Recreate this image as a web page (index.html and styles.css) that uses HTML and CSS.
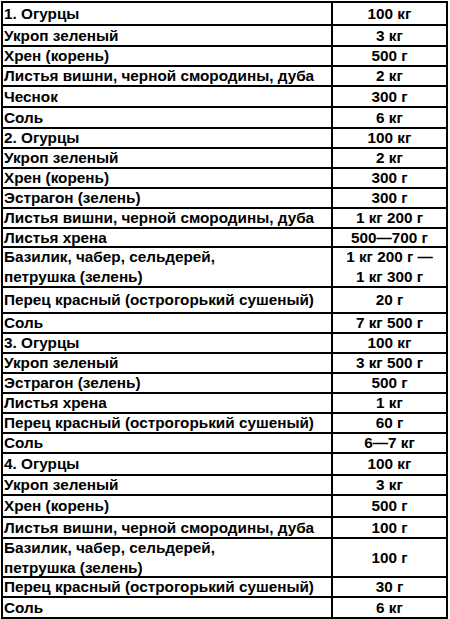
FILE: index.html
```html
<!DOCTYPE html>
<html lang="ru">
<head>
<meta charset="utf-8">
<link rel="stylesheet" href="styles.css">
</head>
<body>
<div class="table">
  <div class="row h21 first"><div class="name">1. Огурцы</div><div class="qty">100 кг</div></div>
  <div class="row h21"><div class="name">Укроп зеленый</div><div class="qty">3 кг</div></div>
  <div class="row h20"><div class="name">Хрен (корень)</div><div class="qty">500 г</div></div>
  <div class="row h20"><div class="name">Листья вишни, черной смородины, дуба</div><div class="qty">2 кг</div></div>
  <div class="row h21"><div class="name">Чеснок</div><div class="qty">300 г</div></div>
  <div class="row h21"><div class="name">Соль</div><div class="qty">6 кг</div></div>
  <div class="row h20"><div class="name">2. Огурцы</div><div class="qty">100 кг</div></div>
  <div class="row h20"><div class="name">Укроп зеленый</div><div class="qty">2 кг</div></div>
  <div class="row h20"><div class="name">Хрен (корень)</div><div class="qty">300 г</div></div>
  <div class="row h20"><div class="name">Эстрагон (зелень)</div><div class="qty">300 г</div></div>
  <div class="row h20"><div class="name">Листья вишни, черной смородины, дуба</div><div class="qty">1 кг 200 г</div></div>
  <div class="row h19"><div class="name">Листья хрена</div><div class="qty">500—700 г</div></div>
  <div class="row h40"><div class="name">Базилик, чабер, сельдерей,<br>петрушка (зелень)</div><div class="qty">1 кг 200 г —<br>1 кг 300 г</div></div>
  <div class="row h26"><div class="name">Перец красный (острогорький сушеный)</div><div class="qty">20 г</div></div>
  <div class="row h20"><div class="name">Соль</div><div class="qty">7 кг 500 г</div></div>
  <div class="row h20"><div class="name">3. Огурцы</div><div class="qty">100 кг</div></div>
  <div class="row h20"><div class="name">Укроп зеленый</div><div class="qty">3 кг 500 г</div></div>
  <div class="row h20"><div class="name">Эстрагон (зелень)</div><div class="qty">500 г</div></div>
  <div class="row h20"><div class="name">Листья хрена</div><div class="qty">1 кг</div></div>
  <div class="row h20"><div class="name">Перец красный (острогорький сушеный)</div><div class="qty">60 г</div></div>
  <div class="row h20"><div class="name">Соль</div><div class="qty">6—7 кг</div></div>
  <div class="row h22"><div class="name">4. Огурцы</div><div class="qty">100 кг</div></div>
  <div class="row h20"><div class="name">Укроп зеленый</div><div class="qty">3 кг</div></div>
  <div class="row h22"><div class="name">Хрен (корень)</div><div class="qty">500 г</div></div>
  <div class="row h21"><div class="name">Листья вишни, черной смородины, дуба</div><div class="qty">100 г</div></div>
  <div class="row h39"><div class="name">Базилик, чабер, сельдерей,<br>петрушка (зелень)</div><div class="qty">100 г</div></div>
  <div class="row h20"><div class="name">Перец красный (острогорький сушеный)</div><div class="qty">30 г</div></div>
  <div class="row h21"><div class="name">Соль</div><div class="qty">6 кг</div></div>
</div>
</body>
</html>
```
FILE: styles.css
```css
html, body {
  margin: 0;
  padding: 0;
  background: #fff;
}
body {
  padding: 1px 0 0 1px;
  font-family: "Liberation Sans", Arial, sans-serif;
  font-weight: bold;
  font-size: 15.3px;
  color: #000;
}
.table {
  width: 447px;
  border: 2px solid #000;
  box-sizing: border-box;
}
.row {
  display: flex;
  box-sizing: border-box;
  border-top: 2px solid #000;
  line-height: 20px;
}
.row.first { border-top: none; }
.name {
  width: 330px;
  box-sizing: border-box;
  border-right: 2px solid #000;
  padding-left: 1px;
  display: flex;
  align-items: center;
  white-space: nowrap;
}
.qty {
  flex: 1;
  display: flex;
  align-items: center;
  justify-content: center;
  text-align: center;
  white-space: nowrap;
}
.h19 { height: 19px; }
.h20 { height: 20px; }
.h21 { height: 21px; }
.h22 { height: 22px; }
.h26 { height: 26px; }
.h39 { height: 39px; }
.h40 { height: 40px; }
```
